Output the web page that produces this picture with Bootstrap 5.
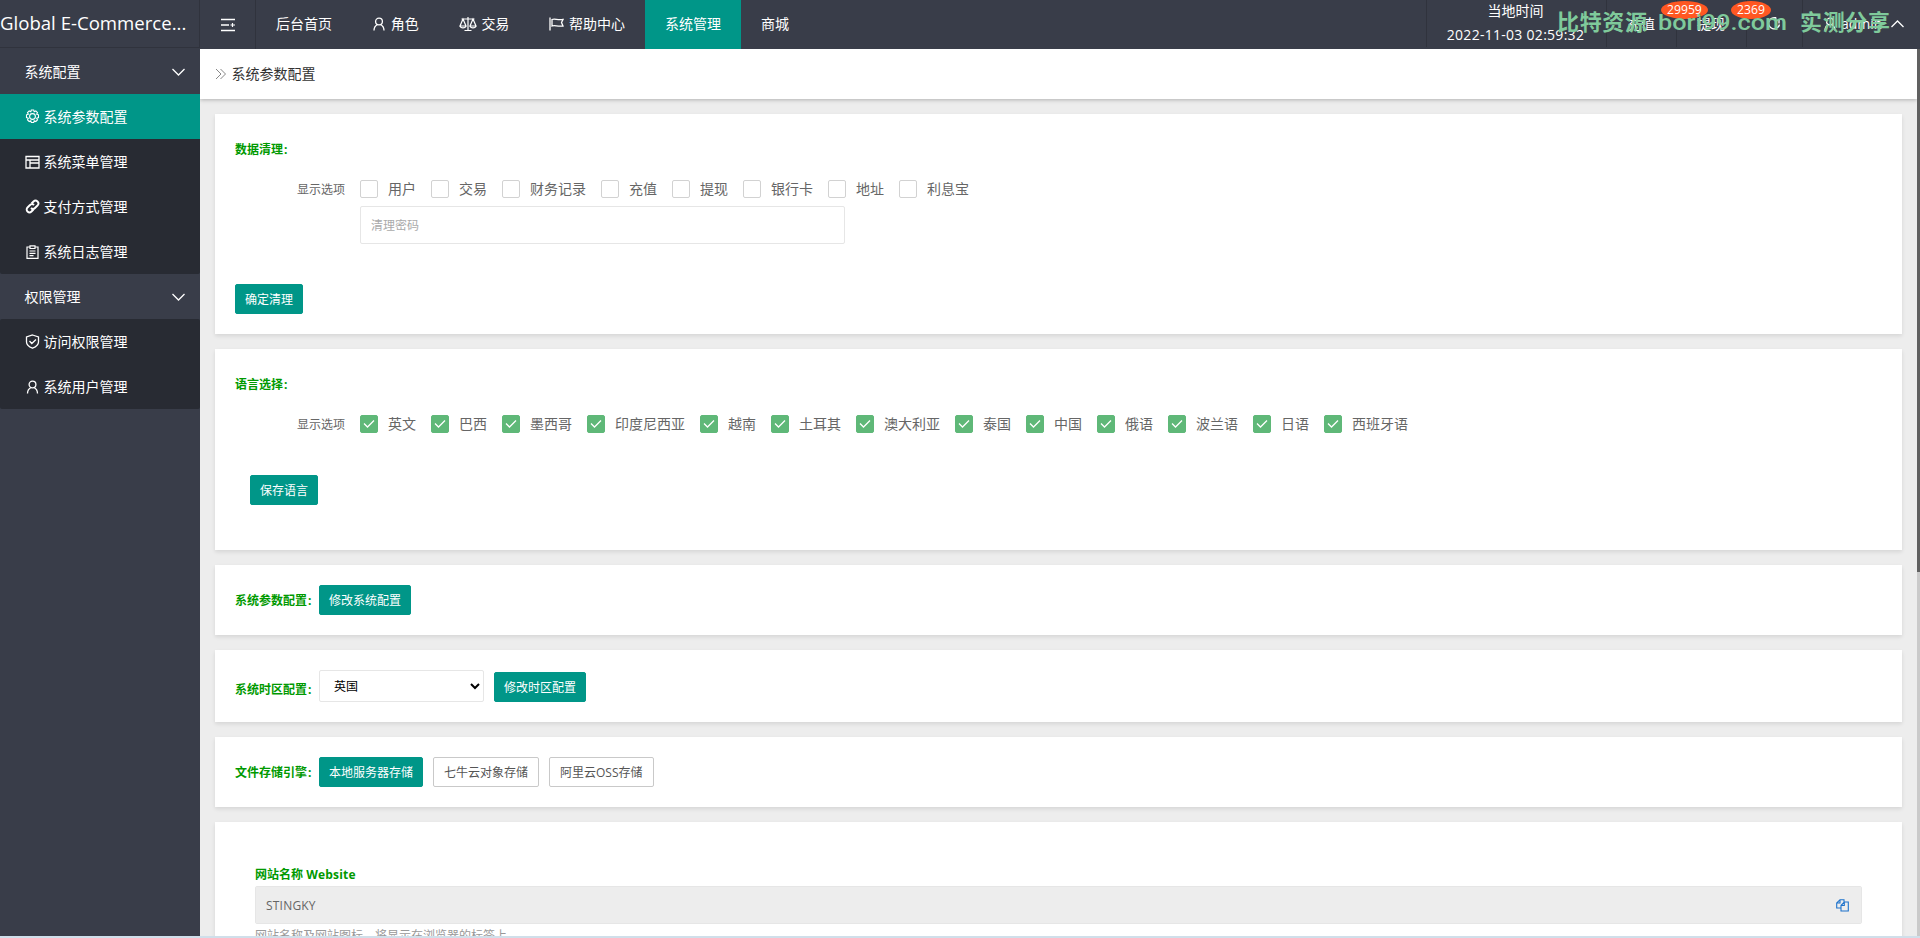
<!DOCTYPE html>
<html lang="zh-CN">
<head>
  <meta charset="UTF-8">
  <meta name="viewport" content="width=device-width, initial-scale=1.0">
  <title>系统参数配置</title>
  <link href="https://cdn.jsdelivr.net/npm/bootstrap@5.3.0/dist/css/bootstrap.min.css" rel="stylesheet">
  <style>
    body {
      font-family: "Open Sans", "Noto Sans CJK SC", sans-serif;
      font-size: 14px;
      line-height: 24px;
      color: #333;
      background-color: #ededed;
      height: 938px;
      overflow: hidden;
    }
    svg.ico {
      fill: none;
      stroke: currentColor;
      stroke-width: 1.3;
      flex: none;
      display: block;
    }

    /* top bar */
    .topbar {
      height: 49px;
      background-color: #393d49;
      color: #fff;
      flex: none;
    }
    .brand-name {
      width: 200px;
      height: 48px;
      line-height: 46px;
      font-size: 18.6px;
      border-right: 1px solid #30333d;
      border-bottom: 1px solid #30333d;
      white-space: nowrap;
      overflow: hidden;
    }
    .toggle-cell {
      width: 56px;
      border-right: 1px solid #30333d;
    }
    .topbar .nav-link {
      color: #fff;
      padding: 0 20px 1px 20px;
      height: 49px;
      display: flex;
      align-items: center;
      gap: 4.7px;
    }
    .topbar .nav-link.active, .side-link.active {
      background-color: #009688;
    }
    .top-cell {
      border-left: 1px solid #30333d;
      height: 47px;
      position: relative;
      display: flex;
      align-items: center;
    }
    .clock {
      letter-spacing: 0.28px;
    }
    .count-pill {
      position: absolute;
      top: 1px;
      height: 18px;
      line-height: 18px;
      padding: 0 6px;
      font-size: 12.2px;
      border-radius: 50%;
      background-color: #ff5722;
      z-index: 1;
    }
    .site-tag {
      position: absolute;
      top: 0;
      left: 1550px;
      z-index: 2;
      fill: #7fca9b;
      font-weight: 700;
    }

    /* sidebar */
    .sidebar {
      width: 200px;
      background-color: #393d49;
      color: #fff;
      flex: none;
    }
    .side-head, .side-link {
      height: 45px;
      padding: 0 15px 0 24.5px;
      display: flex;
      align-items: center;
      color: #fff;
      text-decoration: none;
    }
    .side-link {
      gap: 4px;
    }
    .side-sub {
      background-color: #282b33;
      border-radius: 2px;
    }

    /* content */
    .crumb {
      height: 50px;
      background-color: #fff;
      padding: 0 0 1px 15px;
      box-shadow: 0 1px 4px rgba(0, 0, 0, 0.25);
    }
    .panel {
      background-color: #fff;
      margin-bottom: 15px;
      padding: 20px;
      box-shadow: 0 2px 4px rgba(0, 0, 0, 0.1);
      flex: none;
    }
    .tit {
      color: #090;
      font-size: 12px;
      font-weight: 700;
      line-height: 18px;
      padding-top: 1px;
      white-space: nowrap;
    }
    .tit span {
      margin-left: 1px;
    }
    .opt-label {
      width: 125px;
      padding: 1px 15px 0 0;
      text-align: right;
      font-size: 12px;
      color: #666;
      flex: none;
    }
    .opt {
      display: flex;
      align-items: center;
      padding-right: 15px;
      color: #666;
      height: 18px;
    }
    .opt i {
      width: 18px;
      height: 18px;
      border: 1px solid #d2d2d2;
      border-radius: 2px;
      margin-right: 10px;
    }
    .opt.on i {
      border-color: #5fb878;
      background-color: #5fb878;
      color: #fff;
    }
    .form-control.field {
      height: 38px;
      border: 1px solid #e6e6e6;
      border-radius: 2px;
      font-size: 12px;
      padding: 1px 10px 0;
      color: #666;
    }
    .field::placeholder {
      color: #aaa;
    }
    .btn.btn-act {
      --bs-btn-color: #fff;
      --bs-btn-bg: #009688;
      --bs-btn-border-color: #009688;
      height: 30px;
      padding: 1px 9px 0;
      font-size: 12px;
      line-height: 27px;
      border-radius: 2px;
      white-space: nowrap;
    }
    .btn.btn-plain {
      --bs-btn-color: #555;
      --bs-btn-bg: #fff;
      --bs-btn-border-color: #c9c9c9;
      padding: 1px 10px 0;
    }
    .zone {
      width: 165px;
      height: 32px;
      border: 1px solid #e6e6e6;
      border-radius: 2px;
      padding: 0 5px 0 10px;
      font-size: 12px;
      color: #000;
    }
    .hint {
      font-size: 12px;
      color: #999;
      line-height: 24px;
    }
    .scroll-rail {
      position: absolute;
      right: 0;
      top: 49px;
      width: 3px;
      height: 889px;
      background-color: #cacaca;
    }
    .scroll-rail div {
      height: 523px;
      background-color: #606060;
    }
    .base-strip {
      position: absolute;
      left: 0;
      bottom: 0;
      width: 100%;
      height: 2px;
      background-color: #d0dfea;
    }
  </style>
</head>
<body class="d-flex flex-column">

  <header class="topbar d-flex">
    <div class="brand-name">Global E-Commerce...</div>
    <div class="toggle-cell d-flex align-items-center justify-content-center">
      <svg class="ico" width="14" height="14" viewBox="0 0 14 14" style="stroke-width:1.6"><path d="M0 1.500h14M0 7h8M0 12.500h14"/><path d="M9.500 7H14M11.500 5v4" stroke-width="1.200"/></svg>
    </div>
    <nav class="nav flex-nowrap">
      <a class="nav-link" href="#">后台首页</a>
      <a class="nav-link" href="#">
        <svg class="ico" width="14" height="14" viewBox="0 0 14 14"><circle cx="7" cy="4.500" r="3.400"/><path d="M2 13.500c0-3 1.500-5 3.500-6M12 13.500c0-3-1.500-5-3.500-6"/></svg>
        角色</a>
      <a class="nav-link" href="#">
        <svg class="ico" width="18" height="16" viewBox="0 0 18 16" style="stroke-width:1.200"><path d="M2.500 3h13M9 1v13M5.500 14.500h7M4 3L1 10h6zM14 3l-3 7h6zM1 10c.5 2.500 5.500 2.500 6 0M11 10c.5 2.500 5.500 2.500 6 0"/></svg>
        交易</a>
      <a class="nav-link" href="#">
        <svg class="ico" width="15" height="14" viewBox="0 0 15 14"><path d="M1 0.500v13M3 2.500c3-1.500 5 1 11 0l-1.500 3 1.500 3.500c-6 1-8-1.500-11 0z"/></svg>
        帮助中心</a>
      <a class="nav-link active" href="#">系统管理</a>
      <a class="nav-link" href="#">商城</a>
    </nav>
    <div class="d-flex ms-auto">
      <div class="top-cell flex-column justify-content-center text-center" style="width:180px;padding-right:2px">
        <div style="margin-top:-2px">当地时间</div>
        <div class="clock">2022-11-03 02:59:32</div>
      </div>
      <div class="top-cell" style="width:70px;padding-left:20px">充值<span class="count-pill" style="left:54px">29959</span></div>
      <div class="top-cell" style="width:70px;padding-left:20px">提现<span class="count-pill" style="left:54px">2369</span></div>
      <div class="top-cell" style="width:56px;padding-left:20px">
        <svg class="ico" width="15" height="15" viewBox="0 0 15 15"><path d="M12.500 8.500A5.500 5.500 0 1 1 9.500 2.300M8.500 1v4.500M12 3.500v4"/></svg>
      </div>
      <div class="top-cell" style="width:118px;padding-left:20px">
        <svg class="ico me-1" width="14" height="14" viewBox="0 0 14 14"><circle cx="7" cy="4.500" r="3.400"/><path d="M2 13.500c0-3 1.500-5 3.500-6M12 13.500c0-3-1.500-5-3.500-6"/></svg>
        admin
        <svg class="ico" width="13" height="8" viewBox="0 0 13 8" style="margin-left:9px"><path d="M.5 7l6-6 6 6"/></svg>
      </div>
    </div>
  </header>
  <svg class="site-tag" width="360" height="40" viewBox="0 0 360 40" font-size="22">
    <text x="7" y="30" textLength="90" font-family="Noto Sans CJK SC, sans-serif">比特资源</text>
    <text x="108" y="30" textLength="129" lengthAdjust="spacingAndGlyphs" font-weight="500" font-family="Roboto, sans-serif">bori99.com</text>
    <text x="250" y="30" textLength="90" font-family="Noto Sans CJK SC, sans-serif">实测分享</text>
  </svg>

  <div class="d-flex flex-grow-1" style="min-height:0">
    <aside class="sidebar">
      <div class="side-head justify-content-between">系统配置
        <svg class="ico" width="13" height="8" viewBox="0 0 13 8"><path d="M.5 1l6 6 6-6"/></svg></div>
      <div class="side-sub">
        <a class="side-link active" href="#">
          <svg class="ico" width="15" height="15" viewBox="0 0 15 15" style="stroke-width:1.100"><circle cx="7.500" cy="7.500" r="2.900"/><path d="M6.300 1h2.400l.5 1.700 1.600-.8 1.700 1.700-.8 1.600 1.800.6v2.800l-1.800.6.8 1.600-1.700 1.700-1.600-.8-.5 1.800H6.300l-.5-1.800-1.600.8-1.700-1.700.8-1.600-1.800-.6V5.800l1.800-.6-.8-1.600 1.700-1.700 1.600.8z"/></svg>
          系统参数配置</a>
        <a class="side-link" href="#">
          <svg class="ico" width="15" height="14" viewBox="0 0 15 14"><path d="M1 1.500h13v11.500H1zM1 5h13M5 5v8M5 8h9"/></svg>
          系统菜单管理</a>
        <a class="side-link" href="#">
          <svg class="ico" width="15" height="15" viewBox="0 0 15 15" style="stroke-width:1.900"><path d="M6.500 4.500l2-2a2.700 2.700 0 0 1 4 4l-2.500 2.500a2.700 2.700 0 0 1-4 0M8.500 10.500l-2 2a2.700 2.700 0 0 1-4-4L5 6a2.700 2.700 0 0 1 4 0"/></svg>
          支付方式管理</a>
        <a class="side-link" href="#">
          <svg class="ico" width="15" height="14" viewBox="0 0 15 14" style="stroke-width:1.200"><path d="M4.500 2H2v11.400h11V2h-2.500M5 .8h5v2.700H5zM4.500 6h6M4.500 8.300h6M4.500 10.600h4"/></svg>
          系统日志管理</a>
      </div>
      <div class="side-head justify-content-between">权限管理
        <svg class="ico" width="13" height="8" viewBox="0 0 13 8"><path d="M.5 1l6 6 6-6"/></svg></div>
      <div class="side-sub">
        <a class="side-link" href="#">
          <svg class="ico" width="15" height="15" viewBox="0 0 15 15"><path d="M7.500 1l6 2v5c0 3-3 5-6 6.200-3-1.200-6-3.200-6-6.200V3zM4.500 7l2.300 2.500L11 5.500"/></svg>
          访问权限管理</a>
        <a class="side-link" href="#">
          <svg class="ico" width="15" height="14" viewBox="0 0 15 14"><circle cx="7.500" cy="4.500" r="3.400"/><path d="M2.500 13.500c0-3 1.500-5 3.500-6M12.500 13.500c0-3-1.500-5-3.500-6"/></svg>
          系统用户管理</a>
      </div>
    </aside>

    <main class="flex-grow-1 d-flex flex-column overflow-hidden" style="padding-right:3px">
      <div class="crumb d-flex align-items-center flex-shrink-0">
        <svg class="ico" width="12" height="12" viewBox="0 0 12 12" style="stroke-width:1;color:#888;margin-right:4.500px"><path d="M1 1l5 5-5 5M5.500 1l5 5-5 5"/></svg>
        系统参数配置
      </div>

      <div class="d-flex flex-column" style="padding:15px 15px 0">
        <section class="panel" style="height:220px">
          <div class="tit" style="margin-top:6px">数据清理<span>:</span></div>
          <div class="d-flex align-items-center" style="margin-top:21px;height:18px">
            <div class="opt-label">显示选项</div>
            <div class="d-flex" id="clear-opts"></div>
          </div>
          <input class="form-control field" style="width:485px;margin:8px 0 40px 125px" type="text" placeholder="清理密码">
          <button class="btn btn-act d-block">确定清理</button>
        </section>

        <section class="panel" style="height:201px">
          <div class="tit" style="margin-top:6px">语言选择<span>:</span></div>
          <div class="d-flex align-items-center" style="margin-top:21px;height:18px">
            <div class="opt-label">显示选项</div>
            <div class="d-flex" id="lang-opts"></div>
          </div>
          <button class="btn btn-act d-block" style="margin:42px 0 0 15px">保存语言</button>
        </section>

        <section class="panel d-flex align-items-center" style="height:70px">
          <div class="tit" style="width:84px">系统参数配置<span>:</span></div>
          <button class="btn btn-act">修改系统配置</button>
        </section>

        <section class="panel d-flex align-items-end" style="height:72px">
          <div class="tit" style="width:84px;margin-bottom:3px">系统时区配置<span>:</span></div>
          <select class="zone bg-white"><option>英国</option></select>
          <button class="btn btn-act" style="margin-left:10px">修改时区配置</button>
        </section>

        <section class="panel d-flex align-items-center" style="height:70px">
          <div class="tit" style="width:84px">文件存储引擎<span>:</span></div>
          <div class="d-flex" style="gap:10px">
            <button class="btn btn-act">本地服务器存储</button>
            <button class="btn btn-act btn-plain">七牛云对象存储</button>
            <button class="btn btn-act btn-plain">阿里云OSS存储</button>
          </div>
        </section>

        <section class="panel" style="padding:43px 40px 20px">
          <div class="tit">网站名称 <span style="margin-left:0;letter-spacing:.2px">Website</span></div>
          <div class="form-control field d-flex align-items-center justify-content-between" style="background-color:#ededed;margin-top:2px;padding-right:12px">
            <span style="letter-spacing:.2px">STINGKY</span>
            <svg class="ico" width="13" height="13" viewBox="0 0 13 13" style="color:#1e73cc;stroke-width:1.100"><path d="M5 9H.7V4L4 .7h4v2M4 .7V4H.7M5 6.500L8.300 3h4v9H5zM8.300 3v3.500H5"/></svg>
          </div>
          <div class="hint">网站名称及网站图标，将显示在浏览器的标签上</div>
        </section>
      </div>
    </main>
  </div>

  <div class="scroll-rail"><div></div></div>
  <div class="base-strip"></div>

  <script src="https://cdn.jsdelivr.net/npm/bootstrap@5.3.0/dist/js/bootstrap.bundle.min.js"></script>
  <script>
    const tick = '<svg class="ico" width="16" height="16" viewBox="0 0 16 16"><path d="M3 7.5l3.500 3.500L13 4.500"/></svg>';

    function renderOptions(id, names, checked) {
      document.getElementById(id).innerHTML = names.map(name =>
        `<label class="opt${checked ? ' on' : ''}"><i>${checked ? tick : ''}</i>${name}</label>`
      ).join("");
    }

    renderOptions("clear-opts", ["用户", "交易", "财务记录", "充值", "提现", "银行卡", "地址", "利息宝"], false);
    renderOptions("lang-opts", ["英文", "巴西", "墨西哥", "印度尼西亚", "越南", "土耳其", "澳大利亚", "泰国", "中国", "俄语", "波兰语", "日语", "西班牙语"], true);
  </script>
</body>
</html>
